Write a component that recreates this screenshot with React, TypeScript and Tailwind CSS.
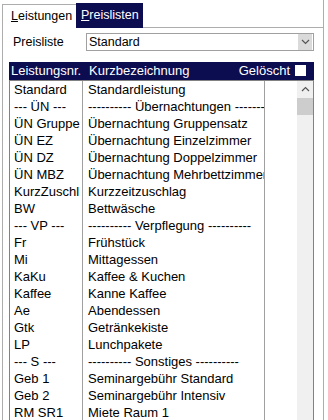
import * as React from "react";

const ROWS: [string, string][] = [
  ["Standard", "Standardleistung"],
  ["--- ÜN ---", "---------- Übernachtungen ----------"],
  ["ÜN Gruppe", "Übernachtung Gruppensatz"],
  ["ÜN EZ", "Übernachtung Einzelzimmer"],
  ["ÜN DZ", "Übernachtung Doppelzimmer"],
  ["ÜN MBZ", "Übernachtung Mehrbettzimmer"],
  ["KurzZuschl", "Kurzzeitzuschlag"],
  ["BW", "Bettwäsche"],
  ["--- VP ---", "---------- Verpflegung ----------"],
  ["Fr", "Frühstück"],
  ["Mi", "Mittagessen"],
  ["KaKu", "Kaffee & Kuchen"],
  ["Kaffee", "Kanne Kaffee"],
  ["Ae", "Abendessen"],
  ["Gtk", "Getränkekiste"],
  ["LP", "Lunchpakete"],
  ["--- S ---", "---------- Sonstiges ----------"],
  ["Geb 1", "Seminargebühr Standard"],
  ["Geb 2", "Seminargebühr Intensiv"],
  ["RM SR1", "Miete Raum 1"],
];

function Chevron({ up }: { up?: boolean }) {
  return (
    <svg width="9" height="6" viewBox="0 0 9 6" fill="none">
      <path
        d={up ? "M1 5 L4.5 1.5 L8 5" : "M1 1 L4.5 4.5 L8 1"}
        stroke="#555"
        strokeWidth="1.2"
      />
    </svg>
  );
}

export default function App() {
  return (
    <div className="h-[420px] w-[328px] overflow-hidden bg-white font-['Liberation_Sans',Arial,sans-serif] text-[13px] text-black">
      {/* Tab strip */}
      <div className="flex h-[28px] items-end pl-[2px] pr-[4px] text-[12.5px]">
        <div className="flex h-[24px] w-[74px] items-center border-l border-t border-[#adadad] pl-[8px]">
          <span>
            <span className="underline">L</span>eistungen
          </span>
        </div>
        <div className="flex h-[25px] w-[67px] items-center bg-[#0c0c50] pl-[5px] text-white">
          <span>
            <span className="underline">P</span>reislisten
          </span>
        </div>
        <div className="h-full flex-1 border-b border-r border-[#adadad]" />
      </div>

      {/* Panel */}
      <div className="ml-[2px] w-[322px] border-x border-[#adadad] pt-[5px]">
        <div className="flex items-center text-[12.5px]">
          <span className="w-[83px] pl-[10px]">Preisliste</span>
          <div className="flex h-[18px] w-[228px] items-center border border-[#a0a0a0]">
            <span className="flex-1 pl-[2px]">Standard</span>
            <div className="mr-px flex h-[16px] w-[14px] items-center justify-center bg-[#dadada]">
              <Chevron />
            </div>
          </div>
        </div>

        <div className="ml-[6px] mt-[10px] w-[305px]">
          <div className="flex h-[18px] items-center bg-[#0c0c50] text-white">
            <span className="w-[80px] pl-[2px]">Leistungsnr.</span>
            <span className="flex-1">Kurzbezeichnung</span>
            <span>Gelöscht</span>
            <span className="ml-[5px] mr-[8px] h-[11px] w-[11px] bg-white" />
          </div>

          <div className="flex border border-[#828282]">
            <div className="flex w-[287px] flex-col">
              {ROWS.map(([nr, name]) => (
                <div key={nr} className="flex h-[17px] leading-[17px]">
                  <div className="w-[73px] overflow-hidden whitespace-nowrap border-r border-[#a0a0a0] pl-[4px]">
                    {nr}
                  </div>
                  <div className="w-[182px] overflow-hidden whitespace-nowrap border-r border-[#a0a0a0] pl-[5px]">
                    {name}
                  </div>
                  <div className="flex-1" />
                </div>
              ))}
            </div>
            <div className="flex w-[16px] flex-col bg-[#f0f0f0]">
              <div className="flex h-[17px] items-center justify-center">
                <Chevron up />
              </div>
              <div className="h-[17px] bg-[#cdcdcd]" />
            </div>
          </div>
        </div>
      </div>
    </div>
  );
}
